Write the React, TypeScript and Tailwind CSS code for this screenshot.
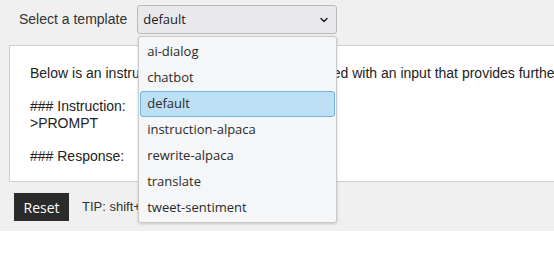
import { ChevronDown } from "lucide-react";

const templates = [
  "ai-dialog",
  "chatbot",
  "default",
  "instruction-alpaca",
  "rewrite-alpaca",
  "translate",
  "tweet-sentiment",
];

const promptText = `Below is an instruction that describes a task, paired with an input that provides further context. Write a response that appropriately completes the request.

### Instruction:
>PROMPT

### Response:`;

function TemplateSelect() {
  return (
    <div className="relative">
      <div className="flex h-[29px] w-[200px] items-center justify-between rounded-[3px] border border-[#b9b9bd] bg-[#e9e9ed] pl-[5px] pr-[6px] font-['Open_Sans',sans-serif] text-[13px] text-[#1a1a1a]">
        <span>default</span>
        <ChevronDown size={12} strokeWidth={3} className="text-[#222]" />
      </div>
      <ul className="absolute left-[1px] top-[31px] z-10 w-[199px] rounded-[3px] border border-[#c9c9c9] bg-[#f5f6f7] pb-[1px] pt-[2px] font-['Open_Sans',sans-serif] text-[13px] text-[#2a2a2a] shadow-[0_1px_3px_rgba(0,0,0,0.18)]">
        {templates.map((t) => (
          <li
            key={t}
            className={
              t === "default"
                ? "mx-[1px] flex h-[26px] items-center rounded-[3px] border border-[#73b4e2] bg-[#bde0f4] pl-[6px]"
                : "mx-[1px] flex h-[26px] items-center border border-transparent pl-[6px]"
            }
          >
            {t}
          </li>
        ))}
      </ul>
    </div>
  );
}

export default function App() {
  return (
    <div className="w-full overflow-hidden bg-white font-['Liberation_Sans',Arial,sans-serif]">
      <div className="w-[900px] bg-[#f0f0f0] pb-[10px] pt-[5px]">
        <div className="flex items-center pl-[19px]">
          <label className="mr-[10px] text-[14px] text-[#333]">Select a template</label>
          <TemplateSelect />
        </div>

        <div className="ml-[9px] mt-[11px] h-[137px] border border-[#cfcfcf] bg-white pl-[20px] pt-[19px] text-[14px] leading-[16.5px] text-[#222] whitespace-pre">
          {promptText}
        </div>

        <div className="mt-[11px] flex items-center pl-[14px]">
          <button className="h-[28px] w-[55px] bg-[#2b2b2b] font-['Open_Sans',sans-serif] text-[14px] text-white">
            Reset
          </button>
          <span className="ml-[13px] text-[13px] text-[#333]">
            TIP: shift+enter for multiple lines
          </span>
        </div>
      </div>
    </div>
  );
}
